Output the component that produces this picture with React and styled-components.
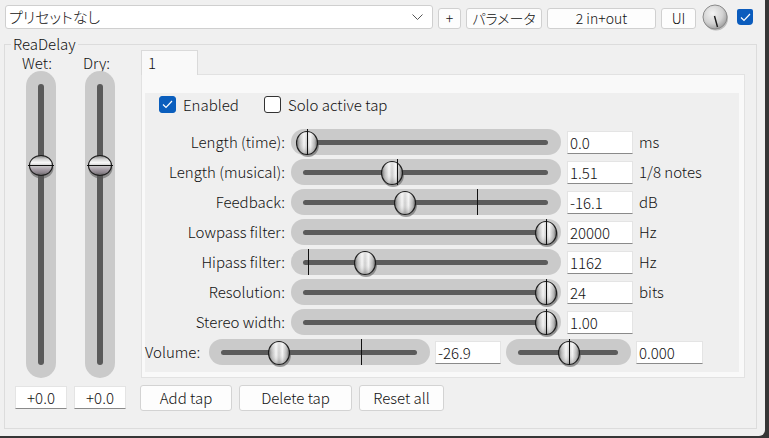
import React from 'react';
import styled, { createGlobalStyle } from 'styled-components';

const GlobalStyle = createGlobalStyle`
  html, body {
    margin: 0;
    padding: 0;
    background: #363636;
  }
  body {
    font-family: "Noto Sans CJK JP", "Noto Sans", sans-serif;
    font-size: 15px;
    font-weight: 300;
    color: #111;
  }
`;

const Window = styled.div`
  width: 765px;
  height: 436px;
  background: #f0f0f0;
  border-bottom-right-radius: 6px;
  box-sizing: border-box;
  padding-top: 5px;
  overflow: hidden;
`;

const TopBar = styled.div`
  display: flex;
  align-items: center;
  gap: 5px;
  height: 24px;
  padding-left: 5px;
`;

const Combo = styled.div`
  width: 428px;
  height: 24px;
  box-sizing: border-box;
  background: #fff;
  border: 1px solid #cfcfcf;
  border-radius: 3px;
  display: flex;
  align-items: center;
  justify-content: space-between;
  padding: 0 9px 0 3px;
  font-size: 15px;
  font-feature-settings: "palt";
  line-height: 20px;
`;

const ToolButton = styled.div`
  width: ${(p) => p.$w}px;
  height: 21px;
  margin-top: 2px;
  box-sizing: border-box;
  background: #fdfdfd;
  border: 1px solid #d0d0d0;
  border-radius: 3px;
  display: flex;
  align-items: center;
  justify-content: center;
  font-size: 14px;
  line-height: 19px;
  font-feature-settings: "palt";
`;

const KnobWrap = styled.div`
  width: 29px;
  height: 27px;
  display: flex;
  align-items: center;
  justify-content: center;
`;

const BlueCheck = styled.div`
  width: 16px;
  height: 16px;
  margin-left: 2px;
  background: #0b5cbd;
  border-radius: 2px 2px 4px 4px;
  display: flex;
  align-items: center;
  justify-content: center;
`;

const Group = styled.div`
  position: relative;
  margin: 15px 0 0 4px;
  width: 753px;
  height: 385px;
  box-sizing: border-box;
  border: 1px solid #dcdcdc;
  display: flex;
  padding: 5px 0 0 10px;
`;

const Legend = styled.div`
  position: absolute;
  top: -9px;
  left: 6px;
  padding: 0 2px;
  background: #f0f0f0;
  font-size: 15px;
  line-height: 16px;
`;

const LeftCol = styled.div`
  width: 111px;
  display: grid;
  grid-template-columns: 52px 52px;
  column-gap: 7px;
`;

const FaderCol = styled.div`
  display: flex;
  flex-direction: column;
  align-items: center;
`;

const FaderLabel = styled.div`
  align-self: stretch;
  height: 21px;
  box-sizing: border-box;
  padding: 4px 0 0 ${(p) => p.$pl}px;
  line-height: 17px;
`;

const VTrack = styled.div`
  position: relative;
  width: 30px;
  height: 307px;
  box-sizing: border-box;
  background: #cacaca;
  border-radius: 15px;
  padding: 13px 0;
  display: flex;
  justify-content: center;
`;

const VLine = styled.div`
  width: 6px;
  background: #5a5a5a;
  border-radius: 3px;
`;

const FaderValue = styled.div`
  margin-top: 8px;
  width: 52px;
  height: 23px;
  box-sizing: border-box;
  background: #fff;
  border: 1px solid #e4e4e4;
  border-bottom-color: #8a8a8a;
  text-align: center;
  font-size: 15px;
  line-height: 21px;
`;

const RightCol = styled.div`
  margin-left: 14px;
  display: flex;
  flex-direction: column;
`;

const TabStrip = styled.div`
  display: flex;
  padding-left: 1px;
`;

const Tab = styled.div`
  position: relative;
  z-index: 1;
  width: 57px;
  height: 25px;
  margin-bottom: -1px;
  box-sizing: border-box;
  background: #f9f9f9;
  border: 1px solid #dadada;
  border-bottom: none;
  padding: 3px 0 0 6px;
  line-height: 18px;
`;

const Panel = styled.div`
  margin-left: 1px;
  width: 604px;
  height: 304px;
  box-sizing: border-box;
  background: #f9f9f9;
  border: 1px solid #e2e2e2;
  padding: 18px 0 0 3px;
`;

const Inner = styled.div`
  width: 594px;
  height: 279px;
  box-sizing: border-box;
  background: #efefef;
  padding-top: 3px;
`;

const CheckRow = styled.div`
  display: flex;
  align-items: center;
  height: 17px;
  padding-left: 14px;
`;

const CheckItem = styled.div`
  display: flex;
  align-items: center;
  gap: 7px;
  width: ${(p) => (p.$w ? `${p.$w}px` : 'auto')};
  line-height: 18px;
`;

const Box = styled.div`
  width: 17px;
  height: 17px;
  box-sizing: border-box;
  border-radius: 3px;
  background: ${(p) => (p.$on ? '#0a5ebd' : '#fff')};
  border: 1px solid ${(p) => (p.$on ? '#0a5ebd' : '#333')};
  display: flex;
  align-items: center;
  justify-content: center;
`;

const Rows = styled.div`
  margin-top: 14px;
  display: grid;
  grid-template-columns: 140px 270px 66px auto;
  grid-auto-rows: 30px;
  column-gap: 6px;
  align-items: center;
`;

const RowLabel = styled.div`
  text-align: right;
  line-height: 18px;
  white-space: nowrap;
`;

const HTrack = styled.div`
  position: relative;
  width: ${(p) => p.$w}px;
  height: 26px;
  box-sizing: border-box;
  background: #cacaca;
  border-radius: 13px;
  padding: 0 13px 0 12px;
  display: flex;
  align-items: center;
`;

const HLine = styled.div`
  flex: 1;
  height: 5px;
  background: #5b5b5b;
  border-radius: 3px;
`;

const ThumbBox = styled.div`
  position: absolute;
  display: flex;
`;

const Tick = styled.div`
  position: absolute;
  background: #111;
  ${(p) =>
    p.$vertical
      ? 'left: 2px; right: 2px; height: 1px;'
      : 'top: 0; bottom: 0; width: 1px;'}
`;

const ValueInput = styled.div`
  width: ${(p) => p.$w || 66}px;
  height: 23px;
  box-sizing: border-box;
  background: #fff;
  border: 1px solid #e4e4e4;
  border-bottom-color: #8a8a8a;
  padding-left: 2px;
  font-size: 15px;
  line-height: 21px;
`;

const Unit = styled.div`
  line-height: 18px;
`;

const VolumeRow = styled.div`
  display: flex;
  align-items: center;
  gap: 5px;
  height: 30px;
`;

const VolumeLabel = styled.div`
  width: 59px;
  line-height: 18px;
`;

const BottomBar = styled.div`
  display: flex;
  gap: 7px;
  margin-top: 7px;
`;

const PushButton = styled.div`
  width: ${(p) => p.$w}px;
  height: 26px;
  box-sizing: border-box;
  background: #fdfdfd;
  border: 1px solid #d3d3d3;
  border-radius: 3px;
  display: flex;
  align-items: center;
  justify-content: center;
  line-height: 18px;
`;

function Thumb({ vertical }) {
  if (vertical) {
    return (
      <svg width="28" height="25" viewBox="0 0 28 25">
        <defs>
          <linearGradient id="vthumb" x1="0" y1="0" x2="0" y2="1">
            <stop offset="0" stopColor="#7a7a7a" />
            <stop offset="0.18" stopColor="#d4d4d4" />
            <stop offset="0.36" stopColor="#f8f8f8" />
            <stop offset="0.5" stopColor="#cfcfcf" />
            <stop offset="0.68" stopColor="#aaa2aa" />
            <stop offset="0.86" stopColor="#8c848c" />
            <stop offset="1" stopColor="#5c5c5c" />
          </linearGradient>
        </defs>
        <ellipse cx="13.5" cy="14" rx="12" ry="10.5" fill="#555" opacity="0.55" />
        <ellipse cx="13" cy="11.5" rx="11.5" ry="10" fill="url(#vthumb)" stroke="#1c1c1c" strokeWidth="1.1" />
      </svg>
    );
  }
  return (
    <svg width="26" height="28" viewBox="0 0 26 28">
      <defs>
        <linearGradient id="hthumb" x1="0" y1="0" x2="1" y2="0">
          <stop offset="0" stopColor="#6c6c6c" />
          <stop offset="0.16" stopColor="#bdbdbd" />
          <stop offset="0.36" stopColor="#f4f4f4" />
          <stop offset="0.5" stopColor="#cdcdcd" />
          <stop offset="0.66" stopColor="#f4f4f4" />
          <stop offset="0.86" stopColor="#b4b4b4" />
          <stop offset="1" stopColor="#666" />
        </linearGradient>
        <linearGradient id="hshade" x1="0" y1="0" x2="0" y2="1">
          <stop offset="0" stopColor="#fff" stopOpacity="0.35" />
          <stop offset="0.5" stopColor="#fff" stopOpacity="0" />
          <stop offset="1" stopColor="#000" stopOpacity="0.25" />
        </linearGradient>
      </defs>
      <ellipse cx="13" cy="15" rx="11" ry="12" fill="#555" opacity="0.55" />
      <ellipse cx="12" cy="13" rx="10.5" ry="11.5" fill="url(#hthumb)" stroke="#1c1c1c" strokeWidth="1.1" />
      <ellipse cx="12" cy="13" rx="10" ry="11" fill="url(#hshade)" />
    </svg>
  );
}

function HSlider({ w, pos, tick }) {
  return (
    <HTrack $w={w}>
      <HLine />
      <ThumbBox style={{ left: pos - 12, top: 1 }}>
        <Thumb />
      </ThumbBox>
      {tick != null && <Tick style={{ left: tick }} />}
    </HTrack>
  );
}

function VSlider({ pos }) {
  return (
    <VTrack>
      <VLine />
      <ThumbBox style={{ top: pos - 11, left: 2 }}>
        <Thumb vertical />
      </ThumbBox>
      <Tick $vertical style={{ top: pos }} />
    </VTrack>
  );
}

function CheckMark() {
  return (
    <svg width="11" height="9" viewBox="0 0 11 9">
      <polyline points="1,4.5 4,7.5 10,1" fill="none" stroke="#fff" strokeWidth="1.2" />
    </svg>
  );
}

function Knob() {
  return (
    <svg width="27" height="27" viewBox="0 0 27 27">
      <defs>
        <radialGradient id="knob" cx="0.4" cy="0.35" r="0.7">
          <stop offset="0" stopColor="#f4f4f4" />
          <stop offset="0.6" stopColor="#d2d2d2" />
          <stop offset="1" stopColor="#9a9a9a" />
        </radialGradient>
      </defs>
      <circle cx="14" cy="14.5" r="12" fill="#888" opacity="0.5" />
      <circle cx="13" cy="13" r="12" fill="url(#knob)" stroke="#8a8a8a" strokeWidth="1" />
      <line x1="12.5" y1="12" x2="15.5" y2="23" stroke="#1a1a1a" strokeWidth="1.4" />
    </svg>
  );
}

const rows = [
  { label: 'Length (time):', pos: 16, tick: 16, value: '0.0', unit: 'ms' },
  { label: 'Length (musical):', pos: 101, tick: 106, value: '1.51', unit: '1/8 notes' },
  { label: 'Feedback:', pos: 114, tick: 186, value: '-16.1', unit: 'dB' },
  { label: 'Lowpass filter:', pos: 255, tick: 255, value: '20000', unit: 'Hz' },
  { label: 'Hipass filter:', pos: 74, tick: 17, value: '1162', unit: 'Hz' },
  { label: 'Resolution:', pos: 255, tick: 255, value: '24', unit: 'bits' },
  { label: 'Stereo width:', pos: 255, tick: 255, value: '1.00', unit: '' },
];

export default function App() {
  return (
    <Window>
      <GlobalStyle />
      <TopBar>
        <Combo>
          <span>プリセットなし</span>
          <svg width="11" height="7" viewBox="0 0 11 7">
            <polyline points="0.5,0.5 5.5,5.5 10.5,0.5" fill="none" stroke="#555" strokeWidth="1" />
          </svg>
        </Combo>
        <ToolButton $w={23}>+</ToolButton>
        <ToolButton $w={76}>パラメータ</ToolButton>
        <ToolButton $w={109}>2 in+out</ToolButton>
        <ToolButton $w={35}>UI</ToolButton>
        <KnobWrap>
          <Knob />
        </KnobWrap>
        <BlueCheck>
          <CheckMark />
        </BlueCheck>
      </TopBar>

      <Group>
        <Legend>ReaDelay</Legend>
        <LeftCol>
          <FaderCol>
            <FaderLabel $pl={7}>Wet:</FaderLabel>
            <VSlider pos={94} />
            <FaderValue>+0.0</FaderValue>
          </FaderCol>
          <FaderCol>
            <FaderLabel $pl={9}>Dry:</FaderLabel>
            <VSlider pos={94} />
            <FaderValue>+0.0</FaderValue>
          </FaderCol>
        </LeftCol>

        <RightCol>
          <TabStrip>
            <Tab>1</Tab>
          </TabStrip>
          <Panel>
            <Inner>
              <CheckRow>
                <CheckItem $w={105}>
                  <Box $on>
                    <CheckMark />
                  </Box>
                  Enabled
                </CheckItem>
                <CheckItem>
                  <Box />
                  Solo active tap
                </CheckItem>
              </CheckRow>
              <Rows>
                {rows.map((r) => (
                  <React.Fragment key={r.label}>
                    <RowLabel>{r.label}</RowLabel>
                    <HSlider w={270} pos={r.pos} tick={r.tick} />
                    <ValueInput>{r.value}</ValueInput>
                    <Unit>{r.unit}</Unit>
                  </React.Fragment>
                ))}
              </Rows>
              <VolumeRow>
                <VolumeLabel>Volume:</VolumeLabel>
                <HSlider w={221} pos={70} tick={152} />
                <ValueInput>-26.9</ValueInput>
                <HSlider w={125} pos={63} tick={63} />
                <ValueInput $w={67}>0.000</ValueInput>
              </VolumeRow>
            </Inner>
          </Panel>
          <BottomBar>
            <PushButton $w={92}>Add tap</PushButton>
            <PushButton $w={113}>Delete tap</PushButton>
            <PushButton $w={85}>Reset all</PushButton>
          </BottomBar>
        </RightCol>
      </Group>
    </Window>
  );
}
